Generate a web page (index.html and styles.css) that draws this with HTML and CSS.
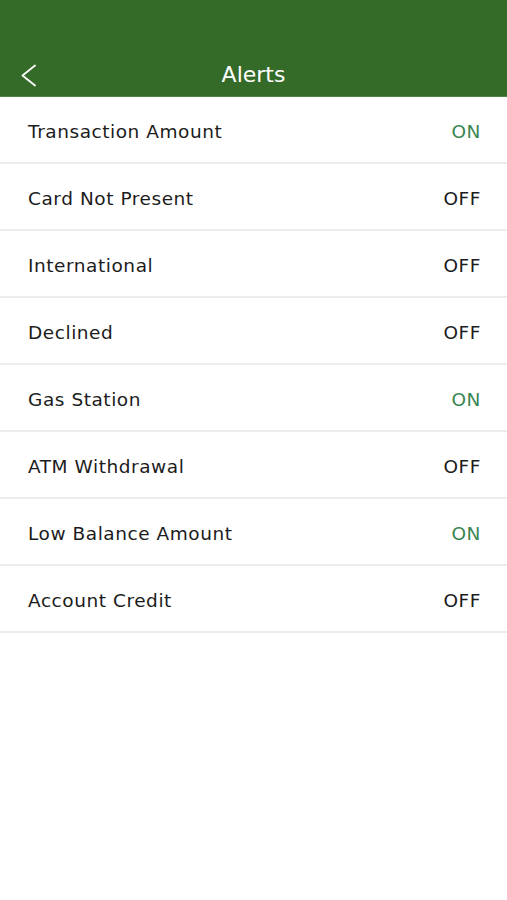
FILE: index.html
```html
<!DOCTYPE html>
<html lang="en">
<head>
    <meta charset="UTF-8">
    <meta name="viewport" content="width=device-width, initial-scale=1.0">
    <title>Alerts</title>
    <link rel="stylesheet" href="styles.css">
</head>
<body>
    <div class="header">
        <div class="nav">
            <svg class="back" width="16" height="24" viewBox="0 0 16 24">
                <polyline points="14,1.5 1.5,11.5 14,21.5" fill="none" stroke="#fff" stroke-width="1.8" stroke-linecap="round" stroke-linejoin="round"/>
            </svg>
            <h1 class="title">Alerts</h1>
        </div>
    </div>
    <div class="list">
        <div class="row"><span class="label">Transaction Amount</span><span class="state on">ON</span></div>
        <div class="row"><span class="label">Card Not Present</span><span class="state">OFF</span></div>
        <div class="row"><span class="label">International</span><span class="state">OFF</span></div>
        <div class="row"><span class="label">Declined</span><span class="state">OFF</span></div>
        <div class="row"><span class="label">Gas Station</span><span class="state on">ON</span></div>
        <div class="row"><span class="label">ATM Withdrawal</span><span class="state">OFF</span></div>
        <div class="row"><span class="label">Low Balance Amount</span><span class="state on">ON</span></div>
        <div class="row"><span class="label">Account Credit</span><span class="state">OFF</span></div>
    </div>
</body>
</html>
```

FILE: styles.css
```css
body {
    margin: 0;
    font-family: "DejaVu Sans", sans-serif;
    background-color: #fff;
    color: #1c1c1c;
}
.header {
    height: 97px;
    background-color: #356b29;
    border-bottom: 1px solid #4f8544;
    box-sizing: border-box;
    display: flex;
    align-items: flex-end;
}
.nav {
    position: relative;
    flex: 1;
    height: 50px;
    display: flex;
    align-items: center;
    justify-content: center;
    padding-top: 7px;
    box-sizing: border-box;
}
.back {
    position: absolute;
    left: 21px;
    top: 18px;
}
.title {
    margin: 0;
    color: #fff;
    font-size: 22px;
    font-weight: normal;
}
.row {
    height: 62px;
    border-bottom: 2px solid #ececec;
    display: flex;
    align-items: center;
    justify-content: space-between;
    padding: 3px 26px 0 28px;
    font-size: 18.5px;
    letter-spacing: 0.55px;
}
.on {
    color: #3a8653;
}
```
